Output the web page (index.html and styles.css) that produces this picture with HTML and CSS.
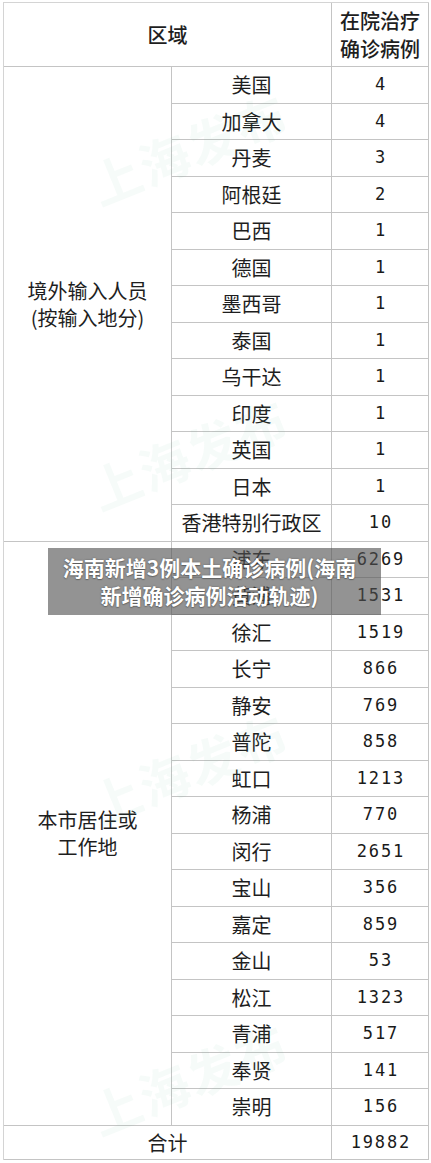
FILE: index.html
```html
<!DOCTYPE html>
<html lang="zh">
<head>
<meta charset="utf-8">
<title>在院治疗确诊病例</title>
<link rel="stylesheet" href="styles.css">
</head>
<body>
<div class="page">
  <div class="sheet">
    <div class="cell head span2">区域</div>
    <div class="cell head"><span>在院治疗<br>确诊病例</span></div>

    <div class="cell group g1"><span>境外输入人员<br>(按输入地分)</span></div>
    <div class="cell name">美国</div><div class="cell num">4</div>
    <div class="cell name">加拿大</div><div class="cell num">4</div>
    <div class="cell name">丹麦</div><div class="cell num">3</div>
    <div class="cell name">阿根廷</div><div class="cell num">2</div>
    <div class="cell name">巴西</div><div class="cell num">1</div>
    <div class="cell name">德国</div><div class="cell num">1</div>
    <div class="cell name">墨西哥</div><div class="cell num">1</div>
    <div class="cell name">泰国</div><div class="cell num">1</div>
    <div class="cell name">乌干达</div><div class="cell num">1</div>
    <div class="cell name">印度</div><div class="cell num">1</div>
    <div class="cell name">英国</div><div class="cell num">1</div>
    <div class="cell name">日本</div><div class="cell num">1</div>
    <div class="cell name">香港特别行政区</div><div class="cell num">10</div>

    <div class="cell group g2"><span>本市居住或<br>工作地</span></div>
    <div class="cell name">浦东</div><div class="cell num">6269</div>
    <div class="cell name">黄浦</div><div class="cell num">1531</div>
    <div class="cell name">徐汇</div><div class="cell num">1519</div>
    <div class="cell name">长宁</div><div class="cell num">866</div>
    <div class="cell name">静安</div><div class="cell num">769</div>
    <div class="cell name">普陀</div><div class="cell num">858</div>
    <div class="cell name">虹口</div><div class="cell num">1213</div>
    <div class="cell name">杨浦</div><div class="cell num">770</div>
    <div class="cell name">闵行</div><div class="cell num">2651</div>
    <div class="cell name">宝山</div><div class="cell num">356</div>
    <div class="cell name">嘉定</div><div class="cell num">859</div>
    <div class="cell name">金山</div><div class="cell num">53</div>
    <div class="cell name">松江</div><div class="cell num">1323</div>
    <div class="cell name">青浦</div><div class="cell num">517</div>
    <div class="cell name">奉贤</div><div class="cell num">141</div>
    <div class="cell name">崇明</div><div class="cell num">156</div>

    <div class="cell total span2">合计</div><div class="cell num total-num">19882</div>
  </div>

  <div class="mark m1">上海发布</div>
  <div class="mark m2">上海发布</div>
  <div class="mark m3">上海发布</div>
  <div class="mark m4">上海发布</div>

  <div class="caption">海南新增3例本土确诊病例(海南<br>新增确诊病例活动轨迹)</div>
</div>
</body>
</html>
```

FILE: styles.css
```css
html, body {
  margin: 0;
  padding: 0;
  background: #ffffff;
}

.page {
  position: relative;
  width: 431px;
  height: 1163px;
  overflow: hidden;
  font-family: "Noto Sans CJK SC", "Noto Sans", sans-serif;
  color: #1e1e1e;
}

.sheet {
  display: grid;
  grid-template-columns: 168px 160px 97px;
  grid-template-rows: 64px repeat(29, 36.5px) 34px;
  margin: 2px 0 0 3px;
  width: 425px;
  border-top: 1px solid #d4d4d4;
  border-left: 1px solid #d4d4d4;
}

.cell {
  display: flex;
  align-items: center;
  justify-content: center;
  border-right: 1px solid #c4c4c4;
  border-bottom: 1px solid #c4c4c4;
  font-size: 20px;
  line-height: 27px;
  text-align: center;
}

.span2 {
  grid-column: span 2;
}

.head {
  font-size: 20px;
  line-height: 28px;
  font-weight: 500;
  padding-top: 1px;
}

.group {
  grid-column: 1;
}

.g1 {
  grid-row: 2 / span 13;
}

.g2 {
  grid-row: 15 / span 16;
}

.name {
  grid-column: 2;
}

.num {
  font-family: "DejaVu Sans Mono", monospace;
  font-size: 17px;
  letter-spacing: 1.8px;
  text-indent: 1.8px;
  color: #1a1a1a;
}

.total {
  grid-column: 1 / span 2;
}

.mark {
  position: absolute;
  font-family: "Noto Sans CJK SC", sans-serif;
  font-weight: 700;
  font-size: 50px;
  letter-spacing: 2px;
  color: rgba(110, 190, 160, 0.06);
  transform: rotate(-22deg);
  transform-origin: left center;
  white-space: nowrap;
  pointer-events: none;
}

.m1 { left: 92px; top: 150px; }
.m2 { left: 92px; top: 455px; }
.m3 { left: 92px; top: 770px; }
.m4 { left: 92px; top: 1080px; }

.caption {
  position: absolute;
  left: 48px;
  top: 548px;
  width: 333px;
  height: 67px;
  box-sizing: border-box;
  padding: 5px 10px 0 0;
  background: rgba(80, 80, 80, 0.62);
  color: #ffffff;
  font-family: "Noto Sans CJK SC", sans-serif;
  font-weight: 700;
  font-size: 21px;
  line-height: 28px;
  text-align: center;
  text-shadow: 0 0 2px rgba(0, 0, 0, 0.35), 0 1px 1px rgba(0, 0, 0, 0.25);
}
```
